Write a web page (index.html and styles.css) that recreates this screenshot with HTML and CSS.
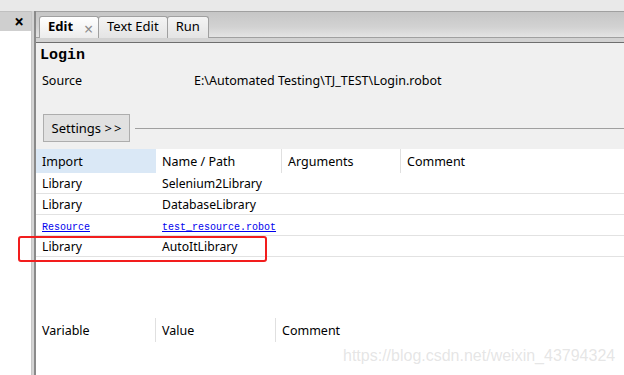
FILE: index.html
```html
<!DOCTYPE html>
<html lang="en">
<head>
  <meta charset="UTF-8" />
  <title>RIDE - Login.robot</title>
  <meta name="viewport" content="width=device-width, initial-scale=1.0" />
  <link rel="stylesheet" href="styles.css">
</head>
<body>

  <div class="top-strip"></div>

  <div class="main">
    <!-- Test tree (collapsed) -->
    <aside class="tree">
      <div class="tree-head"><span class="tree-close">&times;</span></div>
      <div class="tree-body"></div>
    </aside>

    <div class="splitter"></div>

    <!-- Editor -->
    <section class="editor">
      <div class="tab-bar">
        <div class="tab tab-active">Edit <span class="tab-close">&times;</span></div>
        <div class="tab">Text Edit</div>
        <div class="tab">Run</div>
      </div>
      <div class="tab-bar-under"></div>

      <div class="suite-info">
        <h1 class="suite-name">Login</h1>
        <div class="source-row">
          <span class="source-label">Source</span>
          <span class="source-path">E:\Automated Testing\TJ_TEST\Login.robot</span>
        </div>
        <div class="settings-row">
          <button class="settings-button">Settings &gt;&#8201;&gt;</button>
          <div class="settings-rule"></div>
        </div>
      </div>

      <div class="tables">
        <div class="grid import-grid">
          <div class="grid-head grid-head-selected">Import</div>
          <div class="grid-head">Name / Path</div>
          <div class="grid-head">Arguments</div>
          <div class="grid-head grid-head-last">Comment</div>

          <div class="grid-cell">Library</div>
          <div class="grid-cell">Selenium2Library</div>
          <div class="grid-cell"></div>
          <div class="grid-cell"></div>

          <div class="grid-cell">Library</div>
          <div class="grid-cell">DatabaseLibrary</div>
          <div class="grid-cell"></div>
          <div class="grid-cell"></div>

          <div class="grid-cell"><a class="link" href="#">Resource</a></div>
          <div class="grid-cell"><a class="link" href="#">test_resource.robot</a></div>
          <div class="grid-cell"></div>
          <div class="grid-cell"></div>

          <div class="grid-cell">Library</div>
          <div class="grid-cell">AutoItLibrary</div>
          <div class="grid-cell"></div>
          <div class="grid-cell"></div>
        </div>

        <div class="grid variable-grid">
          <div class="grid-head">Variable</div>
          <div class="grid-head">Value</div>
          <div class="grid-head grid-head-last">Comment</div>
        </div>
      </div>
    </section>
  </div>

  <!-- red annotation round the new import -->
  <div class="highlight"></div>

  <div class="watermark">https://blog.csdn.net/weixin_43794324</div>

</body>
</html>
```

FILE: styles.css
```css
:root {
  --panel: #f0f0f0;
  --border: #a0a0a0;
  --dark-line: #6e6e6e;
  --row-line: #e2e2e2;
  --selected: #dae8f6;
  --link: #0000ee;
}

* {
  box-sizing: border-box;
}

body {
  margin: 0;
  width: 624px;
  height: 375px;
  overflow: hidden;
  position: relative;
  font-family: 'Noto Sans', 'Liberation Sans', sans-serif;
  font-size: 12px;
  color: #000;
  background-color: #e9e9e9;
}

.top-strip {
  height: 11px;
  background-color: #e9e9e9;
}

.main {
  display: flex;
  height: 364px;
}

/* left tree panel */
.tree {
  width: 31px;
  display: flex;
  flex-direction: column;
}

.tree-head {
  height: 20px;
  background-color: #cfcfcf;
  border-top: 1px solid #c0c0c0;
  display: flex;
  align-items: center;
  justify-content: flex-end;
  padding-right: 7px;
}

.tree-close {
  font-size: 17px;
  line-height: 1;
  font-weight: bold;
}

.tree-body {
  flex: 1;
  background-color: #fff;
}

.splitter {
  width: 5px;
  background-color: #d4d4d4;
  border-left: 1px solid #c6c6c6;
  border-right: 2px solid #8a8a8a;
}

/* editor */
.editor {
  flex: 1;
  display: flex;
  flex-direction: column;
  background-color: #fff;
}

.tab-bar {
  height: 27px;
  border-top: 1px solid var(--border);
  border-bottom: 1px solid var(--border);
  background: linear-gradient(#c6c6c6, #d2d2d2 60%, #e4e4e4);
  display: flex;
  align-items: flex-end;
  padding-left: 3px;
}

.tab {
  height: 22px;
  margin-bottom: -1px;
  padding: 0 8px 3px 8px;
  display: flex;
  align-items: center;
  border: 1px solid var(--border);
  border-bottom: none;
  border-radius: 3px 3px 0 0;
  background: linear-gradient(#f4f4f4, #e4e4e4);
  font-size: 13px;
}

.tab + .tab {
  margin-left: -1px;
}

.tab-active {
  width: 60px;
  font-weight: bold;
  background: linear-gradient(#ffffff, #ececec);
}

.tab-close {
  margin-left: 11px;
  margin-top: 5px;
  font-weight: normal;
  font-size: 16px;
  color: #8c8c8c;
}

.tab-bar-under {
  height: 5px;
  background-color: #d2d2d2;
  border-bottom: 1px solid var(--dark-line);
}

.suite-info {
  background-color: var(--panel);
  padding: 3px 0 7px 0;
}

.suite-name {
  margin: 0 0 4px 4px;
  font-family: 'Liberation Mono', monospace;
  font-size: 15px;
  line-height: 20px;
  font-weight: bold;
}

.source-row {
  display: flex;
  height: 20px;
  align-items: center;
  padding-left: 6px;
  font-size: 12.5px;
}

.source-label {
  width: 152px;
}

.settings-row {
  display: flex;
  align-items: center;
  margin-top: 24px;
  padding-left: 7px;
}

.settings-button {
  width: 87px;
  height: 28px;
  font-family: inherit;
  font-size: 13px;
  background-color: #e1e1e1;
  border: 1px solid #adadad;
  padding: 0;
}

.settings-rule {
  flex: 1;
  height: 1px;
  margin-left: 5px;
  background-color: var(--border);
}

/* grids */
.grid {
  display: grid;
}

.import-grid {
  grid-template-columns: 120px 126px 119px 1fr;
}

.variable-grid {
  grid-template-columns: 120px 120px 1fr;
  margin-top: 61px;
}

.grid-head {
  height: 24px;
  line-height: 24px;
  padding: 1px 0 0 6px;
  font-size: 12.5px;
  border-right: 1px solid #e0e0e0;
}

.grid-head-selected {
  background-color: var(--selected);
  border-right-color: var(--selected);
}

.grid-head-last {
  border-right: none;
}

.grid-cell {
  height: 21px;
  line-height: 20px;
  padding: 1px 0 0 6px;
  font-size: 12.2px;
  border-bottom: 1px solid var(--row-line);
}

.link {
  font-family: 'Liberation Mono', monospace;
  font-size: 10px;
  color: var(--link);
}

/* annotation + watermark */
.highlight {
  position: absolute;
  left: 18px;
  top: 236px;
  width: 249px;
  height: 26px;
  border: 2px solid #f21d1d;
  border-radius: 3px;
}

.watermark {
  position: absolute;
  left: 343px;
  top: 347px;
  font-family: 'Liberation Sans', Arial, sans-serif;
  font-size: 16px;
  color: rgba(190, 190, 190, 0.4);
}
```
